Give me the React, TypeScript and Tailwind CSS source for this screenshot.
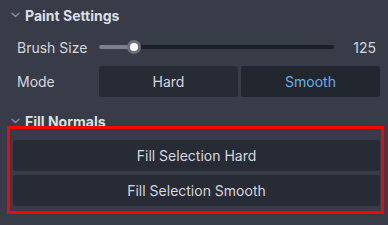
import React from "react";

function Chevron() {
  return (
    <svg width="9" height="6" viewBox="0 0 9 6" className="shrink-0">
      <path d="M1 1.2 L4.5 4.6 L8 1.2" fill="none" stroke="#8a8f99" strokeWidth="1.4" strokeLinecap="round" strokeLinejoin="round" />
    </svg>
  );
}

export default function App() {
  return (
    <div
      className="relative w-[388px] h-[225px] overflow-hidden bg-[#373c48] text-[#d5d8de]"
      style={{ fontFamily: "Inter, 'Noto Sans', sans-serif" }}
    >
      <div className="flex items-center gap-[5px] pl-[11px] h-[30px]">
        <Chevron />
        <span className="text-[14px] font-bold text-[#dcdfe4]">Paint Settings</span>
      </div>
      <div className="flex items-center h-[32px] pl-[17px] pr-[12px] mt-[1px]">
        <span className="w-[82px] text-[14px]">Brush Size</span>
        <div className="relative flex-1 h-[14px] flex items-center">
          <div className="h-[4px] w-[235px] rounded-full bg-[#1c1f25] relative">
            <div className="absolute left-0 top-0 h-[4px] w-[34px] rounded-l-full bg-[#7b808b]" />
            <div className="absolute left-[28px] top-[-5px] w-[14px] h-[14px] rounded-full bg-[#6b707c] flex items-center justify-center">
              <div className="w-[8px] h-[8px] rounded-full bg-white" />
            </div>
          </div>
          <span className="ml-auto text-[14px] text-[#d5d8de]">125</span>
        </div>
      </div>
      <div className="flex items-center h-[31px] pl-[17px] pr-[8px] mt-[3px]">
        <span className="w-[82px] text-[14px]">Mode</span>
        <div className="flex flex-1 gap-[3px] h-[31px]">
          <div className="flex-1 rounded-[3px] bg-[#272b35] flex items-center justify-center text-[14px] text-[#d5d8de]">Hard</div>
          <div className="flex-1 rounded-[3px] bg-[#22262f] flex items-center justify-center text-[14px] text-[#6aaeea]">Smooth</div>
        </div>
      </div>
      <div className="flex items-center gap-[5px] pl-[11px] h-[20px] mt-[14px]">
        <Chevron />
        <span className="text-[14px] font-bold text-[#dcdfe4]">Fill Normals</span>
      </div>
      <div className="flex flex-col gap-[4px] pl-[13px] pr-[8px] mt-[9px]">
        <div className="h-[31px] rounded-[3px] bg-[#272b35] flex items-center justify-center text-[14px]">Fill Selection Hard</div>
        <div className="h-[31px] rounded-[3px] bg-[#272b35] flex items-center justify-center text-[14px]">Fill Selection Smooth</div>
      </div>
      <div className="absolute left-[7px] top-[126px] w-[377px] h-[88px] border-[3px] border-[#ff0000]" />
    </div>
  );
}
